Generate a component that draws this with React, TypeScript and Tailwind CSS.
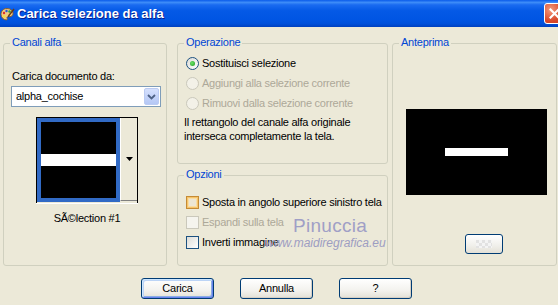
import React from 'react';

function Group({ title, className, children }: { title: string; className?: string; children?: React.ReactNode }) {
  return (
    <div className={`relative rounded-[3px] border border-[#D0D0BF] ${className ?? ''}`}>
      <span className="absolute -top-[8px] left-[6px] bg-[#ECE9D8] px-[2px] leading-[13px] text-[#0046D5]">{title}</span>
      {children}
    </div>
  );
}

function Radio({ checked, disabled, label }: { checked?: boolean; disabled?: boolean; label: string }) {
  return (
    <div className="flex h-[20px] items-center gap-[3px]">
      {checked ? (
        <span className="flex h-[13px] w-[13px] items-center justify-center rounded-full border border-[#1C5180] bg-[linear-gradient(135deg,#DCDCD7,#FFFFFF)]">
          <span className="h-[5px] w-[5px] rounded-full bg-[radial-gradient(circle_at_40%_40%,#6BE36A,#1E9A1E)]" />
        </span>
      ) : (
        <span className="h-[13px] w-[13px] rounded-full border border-[#CAC8BB] bg-[#F3F1E8]" />
      )}
      <span className={disabled ? 'leading-[13px] text-[#ACA899]' : 'leading-[13px] text-black'}>{label}</span>
    </div>
  );
}

function Check({ state, label }: { state: 'hot' | 'disabled' | 'normal'; label: string }) {
  let box = 'h-[13px] w-[13px] border border-[#1C5180] bg-[linear-gradient(135deg,#DCDCD7,#FFFFFF)]';
  if (state === 'hot') box = 'h-[13px] w-[13px] border border-[#C58B35] bg-[#EDE6D3] shadow-[inset_0_0_0_1px_#F6C46A,inset_0_0_0_2px_#F9DDA3]';
  if (state === 'disabled') box = 'h-[13px] w-[13px] border border-[#CAC8BB] bg-[#F5F4EE]';
  return (
    <div className="flex h-[20px] items-center gap-[3px]">
      <span className={box} />
      <span className={state === 'disabled' ? 'leading-[13px] text-[#ACA899]' : 'leading-[13px] text-black'}>{label}</span>
    </div>
  );
}

function XpButton({ label, isDefault }: { label: string; isDefault?: boolean }) {
  return (
    <button
      className={
        isDefault
          ? 'flex h-[21px] w-[73px] items-center justify-center rounded-[3px] border border-[#003C74] bg-[linear-gradient(to_bottom,#FFFFFF,#F3F2EE_60%,#E3E0D6)] shadow-[inset_1px_1px_0_#CEE7FF,inset_-1px_-1px_0_#6982EE,inset_2px_2px_0_#BCD4F6,inset_-2px_-2px_0_#89ADE4] text-black'
          : 'flex h-[21px] w-[73px] items-center justify-center rounded-[3px] border border-[#003C74] bg-[linear-gradient(to_bottom,#FFFFFF,#F3F2EE_60%,#E3E0D6)] shadow-[inset_-1px_-1px_0_#D6D0C5] text-black'
      }
    >
      {label}
    </button>
  );
}

function PaletteIcon() {
  return (
    <svg width="15" height="15" viewBox="0 0 15 15">
      <path d="M7 1.5C3.5 1.5 1 4 1 7.3c0 3 2.4 5.6 5.3 5.6 1.2 0 1.3-.9.8-1.6-.5-.8 0-1.6 1-1.6h1.6c1.9 0 3.3-1.4 3.3-3.4C13 3.6 10.4 1.5 7 1.5z" fill="#F1C982" stroke="#8A5A22" strokeWidth="0.9" />
      <circle cx="4" cy="6" r="1.2" fill="#E0302A" />
      <circle cx="6.5" cy="4" r="1.2" fill="#2A55D8" />
      <circle cx="9.5" cy="4.5" r="1.2" fill="#2EA63A" />
      <circle cx="4.3" cy="9.2" r="1.2" fill="#F3E13A" />
      <path d="M14 2 L8.5 9" stroke="#6A3A12" strokeWidth="1.4" />
      <path d="M8.8 8.4 L7.6 10.6 L9.4 9.4 Z" fill="#333" />
    </svg>
  );
}

export default function App() {
  return (
    <div className="relative flex h-[305px] w-[558px] flex-col overflow-hidden bg-[#ECE9D8] font-['Liberation_Sans',Arial,sans-serif] text-[11px] tracking-[-0.25px] text-black">
      {/* title bar */}
      <div className="flex h-[27px] shrink-0 items-center bg-[linear-gradient(to_bottom,#0A5BEA_0%,#3D8CF8_9%,#1A6BF0_18%,#0459E6_40%,#0055E3_72%,#0050DA_88%,#0040BE_100%)] tracking-normal">
        <div className="ml-[0px] mt-[1px]">
          <PaletteIcon />
        </div>
        <span className="ml-[2px] text-[13px] font-bold text-white [text-shadow:1px_1px_#0A1E8C]">Carica selezione da alfa</span>
        <div className="-mr-[7px] ml-auto flex h-[21px] w-[21px] items-center justify-center rounded-[3px] border border-white bg-[radial-gradient(circle_at_30%_30%,#F39A7C,#D9482A_60%,#C53A1E)]">
          <svg width="11" height="11" viewBox="0 0 11 11">
            <path d="M1.5 1.5 L9.5 9.5 M9.5 1.5 L1.5 9.5" stroke="white" strokeWidth="2.2" strokeLinecap="square" />
          </svg>
        </div>
      </div>

      {/* body */}
      <div className="flex flex-col pl-[3px] pt-[16px]">
        <div className="flex h-[223px]">
          <Group title="Canali alfa" className="w-[164px]">
            <div className="flex flex-col items-start pl-[7px] pt-[26px]">
              <div className="ml-[1px] leading-[13px]">Carica documento da:</div>
              <div className="mt-[3px] flex h-[21px] w-[150px] items-center border border-[#7F9DB9] bg-white">
                <span className="ml-[4px] flex-1 leading-[13px]">alpha_cochise</span>
                <span className="mr-[1px] flex h-[17px] w-[15px] items-center justify-center rounded-[2px] border border-[#BBCBF2] bg-[linear-gradient(to_bottom,#D5E0FD,#B4C7F5)]">
                  <svg width="9" height="6" viewBox="0 0 9 6">
                    <path d="M1 1 L4.5 4.5 L8 1" fill="none" stroke="#4D6185" strokeWidth="1.8" />
                  </svg>
                </span>
              </div>
              <div className="ml-[25px] mt-[10px] flex h-[86px] w-[102px] border-l border-r border-t border-black shadow-[0_1px_0_#FFFFFF]">
                <div className="flex h-[84px] w-[83px] flex-col justify-center border-[4px] border-[#316AC5] bg-black">
                  <div className="h-[12px] bg-white" />
                </div>
                <div className="flex h-[83px] flex-1 items-center justify-center border-b border-[#808080] border-l border-l-[#FFFFFF] bg-[#ECE9D8]">
                  <svg width="7" height="4" viewBox="0 0 7 4">
                    <path d="M0 0 H7 L3.5 4 Z" fill="#000" />
                  </svg>
                </div>
              </div>
              <div className="ml-[25px] mt-[9px] w-[102px] text-center leading-[13px]">SÃ©lection #1</div>
            </div>
          </Group>

          <div className="ml-[10px] flex w-[211px] flex-col">
            <Group title="Operazione" className="h-[121px]">
              <div className="flex flex-col pl-[8px] pt-[9px]">
                <Radio checked label="Sostituisci selezione" />
                <Radio disabled label="Aggiungi alla selezione corrente" />
                <Radio disabled label="Rimuovi dalla selezione corrente" />
                <div className="-ml-[2px] mt-[2px] leading-[14px]">
                  Il rettangolo del canale alfa originale
                  <br />
                  interseca completamente la tela.
                </div>
              </div>
            </Group>
            <Group title="Opzioni" className="mt-[11px] h-[91px]">
              <div className="flex flex-col pl-[8px] pt-[16px]">
                <Check state="hot" label="Sposta in angolo superiore sinistro tela" />
                <Check state="disabled" label="Espandi sulla tela" />
                <Check state="normal" label="Inverti immagine" />
              </div>
              {/* watermark */}
              <span className="pointer-events-none absolute left-[115px] top-[39px] text-[19px] leading-[22px] tracking-[0.3px] text-[#A09FC6]">Pinuccia</span>
              <span className="pointer-events-none absolute left-[87px] top-[60px] text-[12px] italic leading-[14px] tracking-normal text-[#9D9DC2]">www.maidiregrafica.eu</span>
            </Group>
          </div>

          <Group title="Anteprima" className="ml-[4px] w-[165px]">
            <div className="flex flex-col items-start pt-[65px]">
              <div className="ml-[13px] flex h-[86px] w-[141px] items-center justify-center bg-black">
                <div className="h-[8px] w-[63px] bg-white" />
              </div>
              <div className="ml-[72px] mt-[39px] flex h-[20px] w-[38px] items-center justify-center rounded-[3px] border border-[#003C74] bg-[linear-gradient(to_bottom,#FFFFFF,#F0EFEA_60%,#E3E0D6)]">
                <div className="h-[8px] w-[16px] bg-[repeating-conic-gradient(#F4F4F4_0%_25%,#E2E2E2_0%_50%)] bg-[length:6px_6px]" />
              </div>
            </div>
          </Group>
        </div>

        <div className="ml-[138px] mt-[12px] flex gap-[26px]">
          <XpButton label="Carica" isDefault />
          <XpButton label="Annulla" />
          <XpButton label="?" />
        </div>
      </div>
    </div>
  );
}
